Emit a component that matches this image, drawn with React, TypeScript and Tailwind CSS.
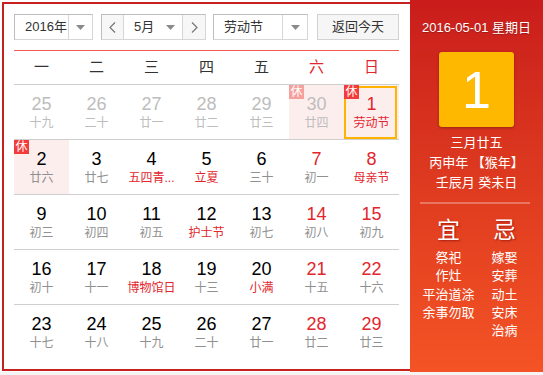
import React from "react";

type Cell = {
  d: number;
  l: string;
  prev?: boolean;
  red?: boolean;
  fest?: boolean;
  rest?: boolean;
  pink?: boolean;
  sel?: boolean;
};

const rows: Cell[][] = [
  [
    { d: 25, l: "十九", prev: true },
    { d: 26, l: "二十", prev: true },
    { d: 27, l: "廿一", prev: true },
    { d: 28, l: "廿二", prev: true },
    { d: 29, l: "廿三", prev: true },
    { d: 30, l: "廿四", prev: true, rest: true, pink: true },
    { d: 1, l: "劳动节", red: true, fest: true, rest: true, pink: true, sel: true },
  ],
  [
    { d: 2, l: "廿六", rest: true, pink: true },
    { d: 3, l: "廿七" },
    { d: 4, l: "五四青...", fest: true },
    { d: 5, l: "立夏", fest: true },
    { d: 6, l: "三十" },
    { d: 7, l: "初一", red: true },
    { d: 8, l: "母亲节", red: true, fest: true },
  ],
  [
    { d: 9, l: "初三" },
    { d: 10, l: "初四" },
    { d: 11, l: "初五" },
    { d: 12, l: "护士节", fest: true },
    { d: 13, l: "初七" },
    { d: 14, l: "初八", red: true },
    { d: 15, l: "初九", red: true },
  ],
  [
    { d: 16, l: "初十" },
    { d: 17, l: "十一" },
    { d: 18, l: "博物馆日", fest: true },
    { d: 19, l: "十三" },
    { d: 20, l: "小满", fest: true },
    { d: 21, l: "十五", red: true },
    { d: 22, l: "十六", red: true },
  ],
  [
    { d: 23, l: "十七" },
    { d: 24, l: "十八" },
    { d: 25, l: "十九" },
    { d: 26, l: "二十" },
    { d: 27, l: "廿一" },
    { d: 28, l: "廿二", red: true },
    { d: 29, l: "廿三", red: true },
  ],
];

const Arrow = () => (
  <svg width="9" height="5" viewBox="0 0 9 5">
    <path d="M0 0H9L4.5 5Z" fill="#8a8a8a" />
  </svg>
);

function DayCell({ c }: { c: Cell }) {
  const num = c.prev ? "text-[#bdbdbd]" : c.red ? "text-[#e3262d]" : "text-black";
  const lunar = c.prev ? "text-[#bdbdbd]" : c.fest ? "text-[#e3262d]" : "text-[#909090]";
  return (
    <div
      className={`relative h-[54px] flex flex-col items-center pt-[9px] ${
        c.pink ? "bg-[#fdeeee]" : ""
      }`}
    >
      {c.sel && (
        <span className="absolute left-0 top-[1px] right-[2px] bottom-0 border-2 border-[#ffb400]" />
      )}
      <span className={`text-[18px] leading-[20px] font-['Liberation_Sans',sans-serif] ${num}`}>{c.d}</span>
      <span className={`text-[12px] leading-[18px] whitespace-nowrap ${lunar}`}>{c.l}</span>
      {c.rest && (
        <span
          className={`absolute left-0 top-0 w-[15px] h-[14px] text-[12px] leading-[14px] text-white text-center ${
            c.prev ? "bg-[#f6a09d]" : "bg-[#f33b3b]"
          }`}
        >
          休
        </span>
      )}
    </div>
  );
}

export default function App() {
  return (
    <div className="w-[543px] h-[375px] bg-white font-['Liberation_Sans','Noto_Sans_CJK_SC',sans-serif] overflow-hidden">
      <div className="flex h-[372px] items-start">
        <div className="mt-[2px] ml-[2px] w-[408px] h-[369px] border-2 border-r-0 border-[#c81f1f] pl-[10px] pt-[10px]">
          {/* controls */}
          <div className="flex h-[26px] text-[13px] text-[#333]">
            <div className="w-[79px] h-[26px] flex border border-[#bdbdbd] border-b-[#d6d6d6] border-r-[#d6d6d6]">
              <div className="flex-1 flex items-center pl-[10px]">2016年</div>
              <div className="w-[24px] flex items-center justify-center border-l border-[#d6d6d6]">
                <Arrow />
              </div>
            </div>
            <div className="ml-[8px] w-[105px] h-[26px] flex border border-[#bdbdbd] border-b-[#d6d6d6] border-r-[#d6d6d6]">
              <div className="w-[22px] flex items-center justify-center bg-[#f7f7f7] border-r border-[#d6d6d6]">
                <svg width="7" height="11" viewBox="0 0 7 11">
                  <path d="M6 0.5L1 5.5L6 10.5" fill="none" stroke="#777" strokeWidth="1.2" />
                </svg>
              </div>
              <div className="flex-1 flex items-center pl-[10px]">
                <span className="w-[32px]">5月</span>
                <Arrow />
              </div>
              <div className="w-[23px] flex items-center justify-center bg-[#f7f7f7] border-l border-[#d6d6d6]">
                <svg width="7" height="11" viewBox="0 0 7 11">
                  <path d="M1 0.5L6 5.5L1 10.5" fill="none" stroke="#777" strokeWidth="1.2" />
                </svg>
              </div>
            </div>
            <div className="ml-[7px] w-[95px] h-[26px] flex border border-[#bdbdbd] border-b-[#d6d6d6] border-r-[#d6d6d6]">
              <div className="flex-1 flex items-center pl-[10px]">劳动节</div>
              <div className="w-[25px] flex items-center justify-center border-l border-[#d6d6d6]">
                <Arrow />
              </div>
            </div>
            <div className="ml-[9px] w-[82px] h-[26px] flex items-center justify-center bg-[#f6f6f6] border border-[#d2d2d2]">
              返回今天
            </div>
          </div>
          {/* red line */}
          <div className="w-[385px] h-[1px] bg-[#f25a52] mt-[10px]" />
          {/* header */}
          <div className="w-[385px] grid grid-cols-7 h-[34px] items-center border-b border-[#cfcfcf] text-[15px] text-[#333] text-center">
            <span>一</span>
            <span>二</span>
            <span>三</span>
            <span>四</span>
            <span>五</span>
            <span className="text-[#e3262d]">六</span>
            <span className="text-[#e3262d]">日</span>
          </div>
          {rows.map((r, i) => (
            <div
              key={i}
              className={`w-[385px] grid grid-cols-7 ${i < rows.length - 1 ? "border-b border-[#cfcfcf]" : ""}`}
            >
              {r.map((c, j) => (
                <DayCell key={j} c={c} />
              ))}
            </div>
          ))}
        </div>
        {/* right panel */}
        <div className="w-[133px] h-[372px] bg-gradient-to-b from-[#c91c1b] to-[#f45325] text-white flex flex-col items-center pt-[18px]">
          <div className="text-[13px] leading-[20px] [text-shadow:0_1px_1px_rgba(0,0,0,0.25)]">2016-05-01 星期日</div>
          <div className="mt-[14px] w-[75px] h-[75px] rounded-[3px] bg-[#ffb800] shadow-[0_1px_3px_rgba(0,0,0,0.3)] flex items-center justify-center text-[52px] leading-none font-['Liberation_Sans',sans-serif]">
            1
          </div>
          <div className="mt-[6px] text-[13px] leading-[20px] text-center">
            <div>三月廿五</div>
            <div>丙申年 【猴年】</div>
            <div>壬辰月 癸未日</div>
          </div>
          <div className="mt-[9px] w-[110px] h-[2px] bg-white/30 self-start ml-[10px]" />
          <div className="mt-[11px] w-[112px] grid grid-cols-2 text-center">
            <div className="flex flex-col items-center">
              <div className="text-[23px] leading-[30px] [text-shadow:1px_1px_2px_rgba(120,0,0,0.6)]">宜</div>
              <div className="mt-[4px] text-[13px] leading-[18.3px] whitespace-nowrap">
                <div>祭祀</div>
                <div>作灶</div>
                <div>平治道涂</div>
                <div>余事勿取</div>
              </div>
            </div>
            <div className="flex flex-col items-center">
              <div className="text-[23px] leading-[30px] [text-shadow:1px_1px_2px_rgba(120,0,0,0.6)]">忌</div>
              <div className="mt-[4px] text-[13px] leading-[18.3px] whitespace-nowrap">
                <div>嫁娶</div>
                <div>安葬</div>
                <div>动土</div>
                <div>安床</div>
                <div>治病</div>
              </div>
            </div>
          </div>
        </div>
      </div>
      <div className="h-[3px] bg-[#f4f4f4]" />
    </div>
  );
}
